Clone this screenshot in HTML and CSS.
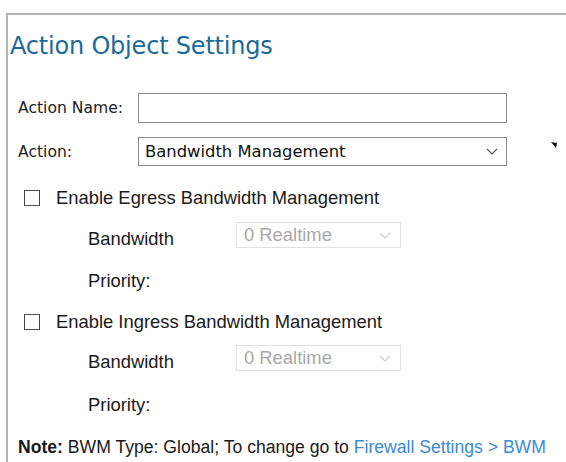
FILE: index.html
```html
<!DOCTYPE html>
<html>
<head>
<meta charset="utf-8">
<link rel="stylesheet" href="styles.css">
</head>
<body>
<div class="panel">
  <h1 class="title">Action Object Settings</h1>
  <div class="form">
    <div class="row row-name">
      <label class="label">Action Name:</label>
      <div class="input"></div>
    </div>
    <div class="row row-action">
      <label class="label">Action:</label>
      <div class="select">
        <span>Bandwidth Management</span>
        <svg class="chev" width="12" height="7" viewBox="0 0 12 7"><path d="M1 1 L6 6 L11 1" fill="none" stroke="#555" stroke-width="1.1"/></svg>
      </div>
      <svg class="marker" width="6" height="6" viewBox="0 0 6 6"><path d="M0 0 L6 1 L5 6 Z" fill="#111"/></svg>
    </div>

    <div class="check-row cb1">
      <span class="checkbox"></span>
      <span class="check-text">Enable Egress Bandwidth Management</span>
    </div>
    <div class="sub-row bw1">
      <span class="sub-label">Bandwidth</span>
      <div class="select-disabled">
        <span>0 Realtime</span>
        <svg class="chev" width="12" height="7" viewBox="0 0 12 7"><path d="M1 1 L6 6 L11 1" fill="none" stroke="#ccc" stroke-width="1.1"/></svg>
      </div>
    </div>
    <div class="sub-row pri1">
      <span class="sub-label">Priority:</span>
    </div>

    <div class="check-row cb2">
      <span class="checkbox"></span>
      <span class="check-text">Enable Ingress Bandwidth Management</span>
    </div>
    <div class="sub-row bw2">
      <span class="sub-label">Bandwidth</span>
      <div class="select-disabled">
        <span>0 Realtime</span>
        <svg class="chev" width="12" height="7" viewBox="0 0 12 7"><path d="M1 1 L6 6 L11 1" fill="none" stroke="#ccc" stroke-width="1.1"/></svg>
      </div>
    </div>
    <div class="sub-row pri2">
      <span class="sub-label">Priority:</span>
    </div>

    <p class="note"><b>Note:</b> BWM Type: Global; To change go to <a class="link">Firewall Settings &gt; BWM</a></p>
  </div>
</div>
</body>
</html>
```
FILE: styles.css
```css
html, body {
  margin: 0;
  padding: 0;
  background: #fff;
  overflow: hidden;
}

.panel {
  margin: 13px 0 0 6px;
  border-top: 2px solid #b4b4b4;
  border-left: 2px solid #b4b4b4;
  height: calc(100vh - 13px);
  box-sizing: border-box;
  overflow: hidden;
}

.title {
  margin: 16px 0 0 2px;
  font-family: "DejaVu Sans", sans-serif;
  font-weight: normal;
  font-size: 24px;
  line-height: 30px;
  color: #1c6a99;
  letter-spacing: -0.2px;
}

.form {
  padding-left: 10px;
  display: flex;
  flex-direction: column;
}

.row {
  display: flex;
  align-items: center;
  height: 30px;
}

.row-name { margin-top: 32px; }
.row-action { margin-top: 14px; height: 29px; }

.label {
  width: 120px;
  font-family: "DejaVu Sans", sans-serif;
  font-size: 15.6px;
  color: #222;
}

.input, .select {
  width: 369px;
  height: 100%;
  box-sizing: border-box;
  border: 1px solid #8c8c8c;
  background: #fff;
}

.select {
  display: flex;
  align-items: center;
  justify-content: space-between;
  padding: 0 8px 0 6px;
  font-family: "DejaVu Sans", sans-serif;
  font-size: 16.4px;
  color: #111;
}

.marker {
  margin: -14px 0 0 44px;
}

.check-row {
  display: flex;
  align-items: center;
  height: 24px;
  padding-left: 6px;
  font-family: "Liberation Sans", Arial, sans-serif;
  font-size: 18.4px;
  color: #1a1a1a;
}

.cb1 { margin-top: 20px; }
.cb2 { margin-top: 19px; }

.checkbox {
  width: 16px;
  height: 16px;
  box-sizing: border-box;
  border: 1.5px solid #4a4a4a;
  margin-right: 16px;
}

.sub-row {
  display: flex;
  align-items: center;
  padding-left: 70px;
  font-family: "Liberation Sans", Arial, sans-serif;
  font-size: 18.4px;
  color: #1a1a1a;
}

.bw1 { margin-top: 12px; height: 26px; }
.bw2 { margin-top: 11px; height: 26px; }
.pri1 { margin-top: 23px; height: 20px; }
.pri2 { margin-top: 24px; height: 20px; }

.sub-label {
  width: 148px;
  padding-top: 8px;
}

.pri1 .sub-label, .pri2 .sub-label { padding-top: 0; }

.select-disabled {
  width: 165px;
  height: 26px;
  box-sizing: border-box;
  border: 1px solid #e2e2e2;
  display: flex;
  align-items: center;
  justify-content: space-between;
  padding: 0 9px 0 7px;
  color: #a8a8a8;
  font-size: 18.4px;
}

.note {
  margin: 22px 0 0 0;
  height: 20px;
  line-height: 20px;
  font-family: "Liberation Sans", Arial, sans-serif;
  font-size: 17.6px;
  color: #1a1a1a;
  white-space: nowrap;
}

.link {
  color: #3b8ad6;
}
```
